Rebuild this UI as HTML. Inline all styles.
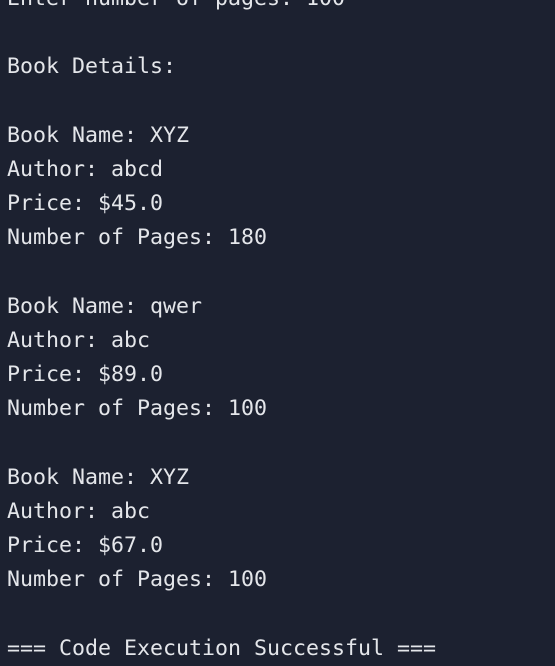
<!DOCTYPE html>
<html><head><meta charset="utf-8"><style>
html,body{margin:0;padding:0;width:555px;height:665px;overflow:hidden;background:#1c2130;}
pre{position:absolute;left:7px;top:-18px;margin:0;font-family:"DejaVu Sans Mono","Liberation Mono",monospace;font-size:21.6px;line-height:34.2px;color:#e4e6ea;white-space:pre;}
</style></head><body><pre>Enter number of pages: 100

Book Details:

Book Name: XYZ
Author: abcd
Price: $45.0
Number of Pages: 180

Book Name: qwer
Author: abc
Price: $89.0
Number of Pages: 100

Book Name: XYZ
Author: abc
Price: $67.0
Number of Pages: 100

=== Code Execution Successful ===</pre></body></html>
